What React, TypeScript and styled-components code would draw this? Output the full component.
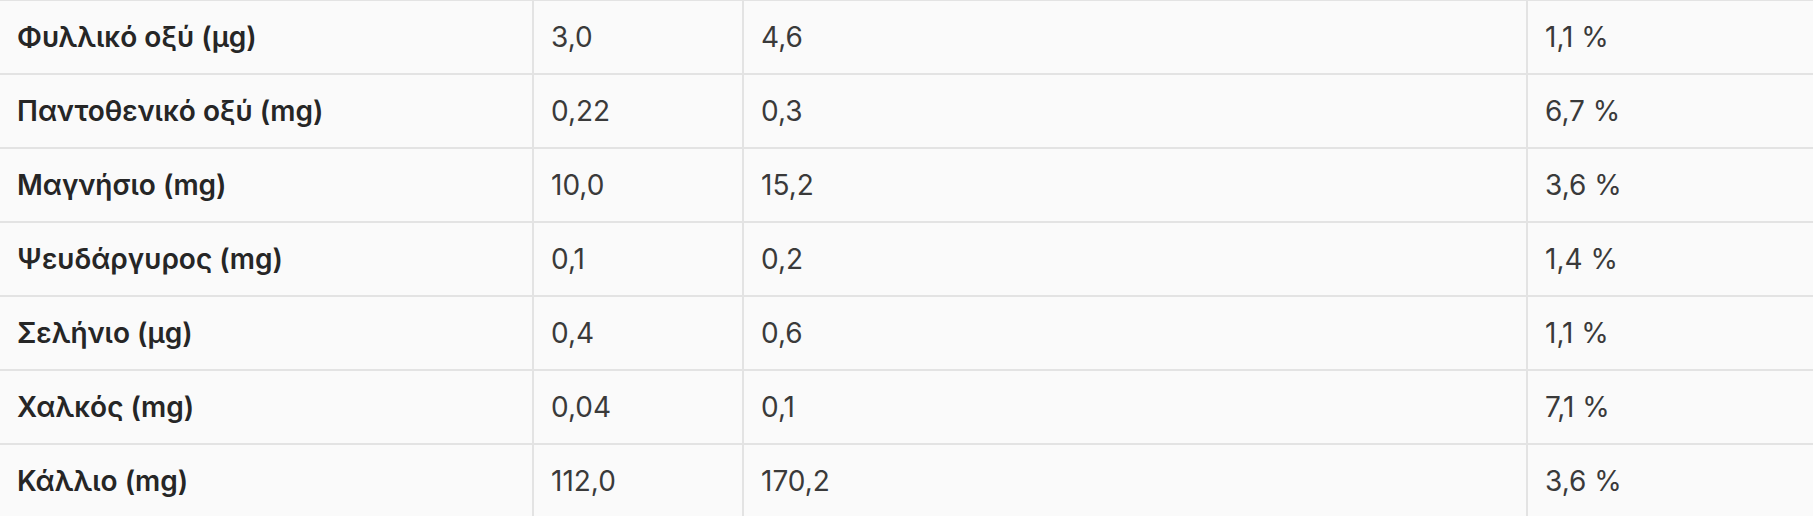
import React from "react";
import styled, { createGlobalStyle } from "styled-components";

const Global = createGlobalStyle`
  html, body { margin: 0; padding: 0; background: #fafafa; }
  body { font-family: Inter, "Noto Sans", "Liberation Sans", sans-serif; overflow: hidden; }
`;

const Table = styled.div`
  display: grid;
  grid-template-columns: 532px 210px 784px 1fr;
  margin-top: -1px;
  background: #fafafa;
  color: #2f2f2f;
`;

const Row = styled.div`
  display: contents;
`;

const Cell = styled.div<{ $first?: boolean }>`
  height: 72px;
  display: flex;
  align-items: center;
  padding-left: 17px;
  border-top: 2px solid #e3e3e3;
  border-left: ${(p) => (p.$first ? "none" : "2px solid #e3e3e3")};
  font-size: 28px;
  font-weight: ${(p) => (p.$first ? 600 : 400)};
  color: ${(p) => (p.$first ? "#262626" : "#3a3a3a")};
  white-space: nowrap;
`;

const rows: [string, string, string, string][] = [
  ["Φυλλικό οξύ (μg)", "3,0", "4,6", "1,1 %"],
  ["Παντοθενικό οξύ (mg)", "0,22", "0,3", "6,7 %"],
  ["Μαγνήσιο (mg)", "10,0", "15,2", "3,6 %"],
  ["Ψευδάργυρος (mg)", "0,1", "0,2", "1,4 %"],
  ["Σελήνιο (μg)", "0,4", "0,6", "1,1 %"],
  ["Χαλκός (mg)", "0,04", "0,1", "7,1 %"],
  ["Κάλλιο (mg)", "112,0", "170,2", "3,6 %"],
];

export default function App() {
  return (
    <>
      <Global />
      <Table>
        {rows.map((r) => (
          <Row key={r[0]}>
            <Cell $first>{r[0]}</Cell>
            <Cell>{r[1]}</Cell>
            <Cell>{r[2]}</Cell>
            <Cell>{r[3]}</Cell>
          </Row>
        ))}
      </Table>
    </>
  );
}
